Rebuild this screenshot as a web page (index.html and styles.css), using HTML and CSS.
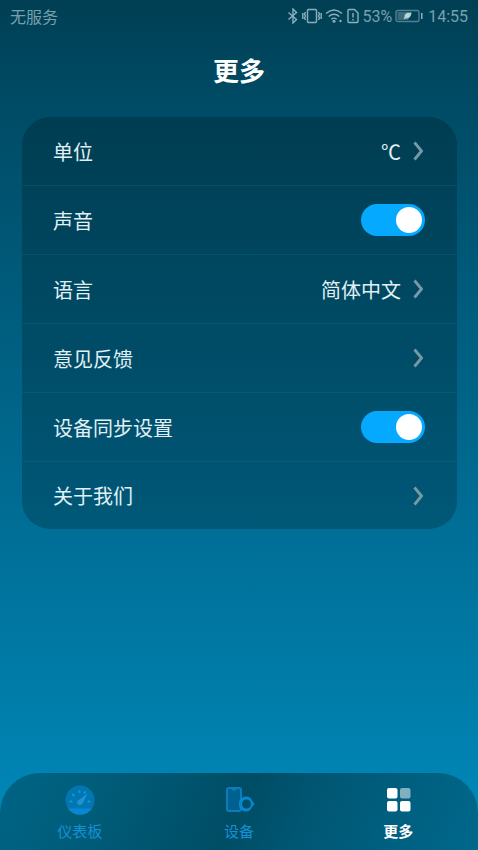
FILE: index.html
```html
<!DOCTYPE html>
<html lang="zh-CN">
<head>
<meta charset="utf-8">
<meta name="viewport" content="width=device-width, initial-scale=1">
<title>更多</title>
<link rel="stylesheet" href="styles.css">
</head>
<body>
<header class="status">
  <span>无服务</span>
  <div class="status-icons">
    <svg width="12" height="16" viewBox="0 0 12 16"><path d="M1.500 4.500 9.500 11.500 6 15V1l3.500 3.500L1.500 11.500"/></svg>
    <svg width="20" height="16" viewBox="0 0 20 16"><rect x="5.500" y="1.500" width="9" height="13" rx="1"/><path d="M3.500 4 2.500 6l1 2-1 2 1 2M.8 5v6M16.500 4l1 2-1 2 1 2-1 2M19.200 5v6"/></svg>
    <svg width="19" height="16" viewBox="0 0 19 16"><path d="M1 5.500Q9 -1.500 17 5.500M3.700 8.500Q9 4 14.300 8.500M6.300 11.200Q9 9 11.700 11.200"/><circle class="solid" cx="9" cy="13.300" r="1.500"/><circle class="solid" cx="15.500" cy="13" r="1.200"/></svg>
    <svg width="12" height="16" viewBox="0 0 12 16"><path d="M1 2.500Q1 1.500 2 1.500H7.500L11 5v8.500q0 1-1 1H2q-1 0-1-1ZM6 5v4.500M6 11v1.500"/></svg>
    <span>53%</span>
    <svg class="battery" width="28" height="16" viewBox="0 0 28 16"><rect x="1" y="2.500" width="23" height="11" rx="2"/><rect class="charge" x="2.500" y="4" width="11" height="8"/><path class="solid" d="M26 5h1.500v6H26Z"/><path class="leaf" d="M16.500 4.500Q9 4 9.500 9l-1 2.500 2-1Q16 11 16.500 4.500Z"/></svg>
    <time>14:55</time>
  </div>
</header>
<main>
  <h1>更多</h1>
  <div class="card">
    <button class="row" type="button"><span>单位</span><span class="value">℃</span><svg class="chevron" viewBox="0 0 10 20"><path d="m1.500 1.500 7 8.500-7 8.500"/></svg></button>
    <label class="row"><span>声音</span><input class="switch" type="checkbox" role="switch" checked></label>
    <button class="row" type="button"><span>语言</span><span class="value">简体中文</span><svg class="chevron" viewBox="0 0 10 20"><path d="m1.500 1.500 7 8.500-7 8.500"/></svg></button>
    <button class="row" type="button"><span>意见反馈</span><svg class="chevron" viewBox="0 0 10 20"><path d="m1.500 1.500 7 8.500-7 8.500"/></svg></button>
    <label class="row"><span>设备同步设置</span><input class="switch" type="checkbox" role="switch" checked></label>
    <button class="row" type="button"><span>关于我们</span><svg class="chevron" viewBox="0 0 10 20"><path d="m1.500 1.500 7 8.500-7 8.500"/></svg></button>
  </div>
</main>
<nav class="tabs">
  <a href="#dashboard">
    <svg width="32" height="32" viewBox="0 0 32 32"><circle cx="16" cy="16" r="14.500" fill="#0077b2"/><path d="M4 24.500h24A14.500 14.500 0 0 1 4 24.500Z" fill="#0788d3"/><path d="M6.500 17.500h1M9 10.500l.7.700M15.500 7v1M25.500 17.500h-1M21 8l-.5.800" stroke="#1c94d1" stroke-width="2" stroke-linecap="round"/><path d="m23.500 9.500-5 10q-2.500 3-5 .5-1.500-3 2-4.500Z" fill="#1c94d1"/></svg>
    <span>仪表板</span>
  </a>
  <a href="#devices">
    <svg width="32" height="32" viewBox="0 0 32 32"><rect x="4" y="4" width="14" height="23" rx="2" fill="#00608f" stroke="#0c7db9" stroke-width="2"/><path d="M8 4.500h6l-1 2H9Z" fill="#0c7db9"/><path d="M23.500 12.500q4 0 5.500 4l2.500 3.500-2.500 3q-2 4.500-6 4.500a7.500 7.500 0 0 1 .5-15Z" fill="#0787cf"/><circle cx="23.500" cy="20" r="4.500" fill="#00506b"/></svg>
    <span>设备</span>
  </a>
  <a class="current" href="#more" aria-current="page">
    <svg width="32" height="32" viewBox="0 0 32 32" fill="#fff"><rect x="5" y="4" width="10.500" height="10.500" rx="2"/><rect x="18" y="4" width="10.500" height="10.500" rx="2" opacity=".5"/><rect x="5" y="17" width="10.500" height="10.500" rx="2"/><rect x="18" y="17" width="10.500" height="10.500" rx="2"/></svg>
    <span>更多</span>
  </a>
</nav>
</body>
</html>
```
FILE: styles.css
```css
* {
  box-sizing: border-box;
}

body {
  margin: 0;
  min-height: 100vh;
  display: flex;
  flex-direction: column;
  font-family: Roboto, "Noto Sans CJK SC", sans-serif;
  color: #e0f0f5;
  background: linear-gradient(#003f54, #004c66 13%, #006f97 63%, #008abb);
}

.status {
  display: flex;
  justify-content: space-between;
  align-items: center;
  height: 32px;
  padding: 0 10px;
  font-size: 16px;
  color: #78a0ae;
}

.status-icons {
  display: flex;
  align-items: center;
  gap: 3px;
}

.status-icons svg {
  fill: none;
  stroke: #8bb0bc;
  stroke-width: 1.4;
}

.status-icons .solid {
  fill: #8bb0bc;
  stroke: none;
}

.status-icons .charge {
  fill: #386b7c;
  stroke: none;
}

.status-icons .leaf {
  fill: #b4d4dc;
  stroke: none;
}

.status-icons .battery {
  stroke: #52818f;
}

time {
  margin-left: 2px;
}

h1 {
  margin: 0;
  padding: 20px 0 25px;
  font-size: 26px;
  line-height: 40px;
  text-align: center;
  color: #fff;
}

.card {
  margin: 0 21px 0 22px;
  border-radius: 28px;
  background: rgb(0 0 0 / 20%);
  overflow: hidden;
}

.row {
  display: flex;
  align-items: center;
  width: 100%;
  height: 69px;
  padding: 0 32px 0 31px;
  border: 0;
  border-bottom: 1px solid rgb(40 145 180 / 16%);
  background: none;
  font: inherit;
  font-size: 20px;
  color: inherit;
  text-align: left;
}

.row:last-child {
  height: 67px;
  border-bottom: 0;
}

.row span:first-child {
  flex: 1;
}

.value {
  margin-right: 12px;
}

.chevron {
  width: 10px;
  height: 20px;
  margin-right: 2px;
  fill: none;
  stroke: #7799a5;
  stroke-width: 2.8;
}

.switch {
  appearance: none;
  display: flex;
  align-items: center;
  width: 64px;
  height: 32px;
  margin: 0;
  padding: 3px;
  border-radius: 16px;
  background: #3b6878;
}

.switch::before {
  content: "";
  width: 26px;
  height: 26px;
  border-radius: 50%;
  background: #fff;
}

.switch:checked {
  justify-content: flex-end;
  background: #05a9ff;
}

.tabs {
  display: grid;
  grid-template-columns: repeat(3, 1fr);
  margin-top: auto;
  padding: 11px 0 6px;
  border-radius: 40px 40px 0 0;
  background: linear-gradient(115deg, #006485, #005d7a 20%, #004d65 50%, #005774 64%, #00688c);
}

.tabs a {
  display: flex;
  flex-direction: column;
  align-items: center;
  gap: 4px;
  font-size: 15px;
  line-height: 24px;
  color: #1690d3;
  text-decoration: none;
}

.tabs .current {
  font-weight: bold;
  color: #fff;
}
```
